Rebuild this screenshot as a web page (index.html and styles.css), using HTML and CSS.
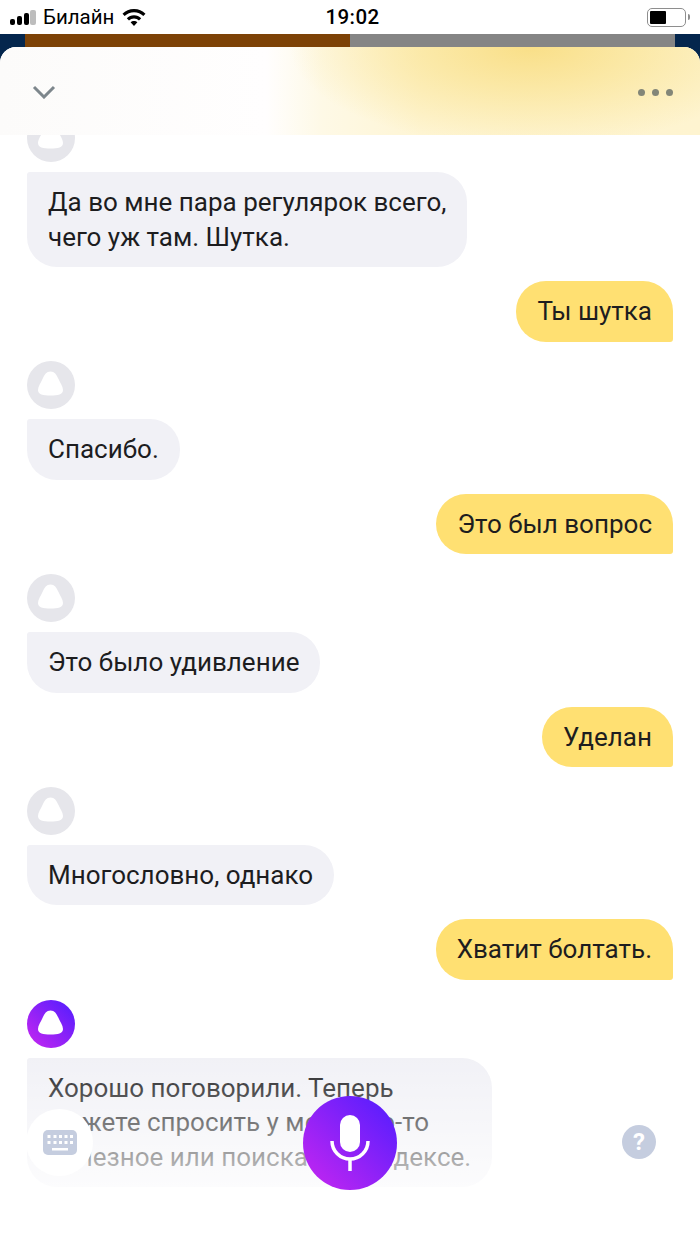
FILE: index.html
```html
<!DOCTYPE html>
<html lang="ru">
<head>
  <meta charset="UTF-8" />
  <title>Алиса</title>
  <link rel="stylesheet" href="styles.css">
</head>
<body>
  <div class="phone">
    <div class="status-bar">
      <div class="status-left">
        <div class="signal">
          <span class="bar b1"></span>
          <span class="bar b2"></span>
          <span class="bar b3"></span>
          <span class="bar b4"></span>
        </div>
        <span class="carrier">Билайн</span>
        <svg class="wifi" width="24" height="18" viewBox="0 0 24 18">
          <path d="M12 1C7.400 1 3.500 2.800.5 5.700l2.200 2.300C5.100 5.700 8.400 4.300 12 4.300s6.900 1.400 9.300 3.700l2.200-2.300C20.500 2.800 16.600 1 12 1z" />
          <path d="M12 7.300c-2.800 0-5.300 1.100-7.200 2.900l2.200 2.300c1.300-1.200 3.100-2 5-2s3.700.8 5 2l2.200-2.300c-1.900-1.800-4.400-2.900-7.200-2.900z" />
          <path d="M12 13c-1.300 0-2.500.5-3.400 1.300L12 18l3.400-3.700c-.9-.8-2.100-1.300-3.400-1.300z" />
        </svg>
      </div>
      <div class="time">19:02</div>
      <div class="battery">
        <div class="battery-body"><div class="battery-level"></div></div>
        <div class="battery-cap"></div>
      </div>
    </div>

    <div class="strip">
      <div class="strip-navy"></div>
      <div class="strip-brown"></div>
      <div class="strip-gray"></div>
      <div class="strip-navy"></div>
    </div>

    <div class="sheet">
      <div class="header">
        <svg class="chevron" width="24" height="14" viewBox="0 0 24 14">
          <path d="M2 2l10 10L22 2" />
        </svg>
        <div class="dots"><span></span><span></span><span></span></div>
      </div>

      <div class="chat">
        <svg class="avatar first" viewBox="0 0 48 48"><use href="#alice-grey" /></svg>
        <div class="msg alice">Да во мне пара регулярок всего,<br>чего уж там. Шутка.</div>
        <div class="msg me">Ты шутка</div>

        <svg class="avatar" viewBox="0 0 48 48"><use href="#alice-grey" /></svg>
        <div class="msg alice">Спасибо.</div>
        <div class="msg me">Это был вопрос</div>

        <svg class="avatar" viewBox="0 0 48 48"><use href="#alice-grey" /></svg>
        <div class="msg alice">Это было удивление</div>
        <div class="msg me">Уделан</div>

        <svg class="avatar" viewBox="0 0 48 48"><use href="#alice-grey" /></svg>
        <div class="msg alice">Многословно, однако</div>
        <div class="msg me">Хватит болтать.</div>

        <svg class="avatar" viewBox="0 0 48 48">
          <defs>
            <linearGradient id="alice-purple" x1="0" y1="1" x2="1" y2="0">
              <stop offset="0" stop-color="#c926f0" />
              <stop offset="1" stop-color="#4f1dff" />
            </linearGradient>
          </defs>
          <circle cx="24" cy="24" r="24" fill="url(#alice-purple)" />
          <path class="alice-shape" d="M23.500 10.500C27.500 10.500 29.500 13.500 31.500 18 33 21.500 36 25.500 36 29 36 33.500 31 34.500 23.500 34.500 16 34.500 11 33.500 11 29 11 25.500 14 21.500 15.500 18 17.500 13.500 19.500 10.500 23.500 10.500z" />
        </svg>
        <div class="msg alice">Хорошо поговорили. Теперь<br>можете спросить у меня что-то<br>полезное или поискать в Яндексе.</div>
      </div>

      <div class="fade"></div>

      <div class="keyboard-btn">
        <svg width="34" height="25" viewBox="0 0 34 25">
          <rect class="kb-body" width="34" height="25" rx="5" />
          <g class="kb-keys">
            <rect x="4.500" y="5" width="3" height="3" />
            <rect x="10.500" y="5" width="3" height="3" />
            <rect x="16" y="5" width="3" height="3" />
            <rect x="21.500" y="5" width="3" height="3" />
            <rect x="27" y="5" width="3" height="3" />
            <rect x="4.500" y="11" width="3" height="3" />
            <rect x="10.500" y="11" width="3" height="3" />
            <rect x="16" y="11" width="3" height="3" />
            <rect x="21.500" y="11" width="3" height="3" />
            <rect x="27" y="11" width="3" height="3" />
            <rect x="9" y="18" width="16" height="2.500" />
          </g>
        </svg>
      </div>

      <div class="mic-btn">
        <svg width="40" height="56" viewBox="0 0 40 56">
          <rect x="10" y="0" width="20" height="37" rx="10" fill="#fff" />
          <path class="mic-arc" d="M2 26c0 10 8 18 18 18s18-8 18-18" />
          <path class="mic-arc" d="M20 44v12" />
        </svg>
      </div>

      <div class="help-btn">?</div>
    </div>

    <svg class="sprites" width="0" height="0">
      <symbol id="alice-grey" viewBox="0 0 48 48">
        <circle cx="24" cy="24" r="24" fill="#e6e6eb" />
        <path fill="#fff" d="M23.500 10.500C27.500 10.500 29.500 13.500 31.500 18 33 21.500 36 25.500 36 29 36 33.500 31 34.500 23.500 34.500 16 34.500 11 33.500 11 29 11 25.500 14 21.500 15.500 18 17.500 13.500 19.500 10.500 23.500 10.500z" />
      </symbol>
    </svg>
  </div>
</body>
</html>
```

FILE: styles.css
```css
* {
  box-sizing: border-box;
}

body {
  margin: 0;
  background: #fff;
  color: #1d1d1f;
  font-family: Roboto, Inter, sans-serif;
}

.phone {
  width: 700px;
  height: 1244px;
  overflow: hidden;
  display: flex;
  flex-direction: column;
  position: relative;
}

/* status bar */
.status-bar {
  height: 34px;
  flex: none;
  display: flex;
  align-items: center;
  justify-content: space-between;
  padding: 0 10px;
  background: #fff;
  color: #000;
  position: relative;
}

.status-left {
  display: flex;
  align-items: center;
}

.signal {
  display: flex;
  align-items: flex-end;
  gap: 1.5px;
  width: 27px;
  height: 16px;
}

.bar {
  width: 5.300px;
  background: #000;
  border-radius: 2px;
}

.b1 { height: 6px; }
.b2 { height: 9px; }
.b3 { height: 12px; }
.b4 { height: 15px; background: #bdbdbd; }

.carrier {
  margin-left: 6px;
  font-size: 20.500px;
}

.wifi {
  margin-left: 8px;
  fill: #000;
}

.time {
  position: absolute;
  left: 0;
  right: 0;
  padding-left: 5px;
  text-align: center;
  font-size: 20.500px;
  font-weight: 500;
  letter-spacing: 0.4px;
}

.battery {
  display: flex;
  align-items: center;
}

.battery-body {
  width: 39px;
  height: 19px;
  border: 1.500px solid #8e8e8e;
  border-radius: 5px;
  padding: 2px;
}

.battery-level {
  width: 16px;
  height: 100%;
  background: #000;
  border-radius: 1px;
}

.battery-cap {
  width: 2px;
  height: 6px;
  margin-left: 2px;
  background: #8e8e8e;
  border-radius: 0 2px 2px 0;
}

/* strip of the page behind the sheet */
.strip {
  position: absolute;
  top: 34px;
  left: 0;
  width: 700px;
  height: 30px;
  display: flex;
}

.strip-navy { width: 25px; background: #04264d; }
.strip-brown { width: 325px; background: #7d4206; }
.strip-gray { width: 325px; background: #858585; }

/* sheet */
.sheet {
  margin-top: 13px;
  flex: 1;
  min-height: 0;
  background: #fff;
  border-radius: 16px 16px 0 0;
  overflow: hidden;
  display: flex;
  flex-direction: column;
  position: relative;
}

.header {
  height: 88px;
  flex: none;
  padding: 0 27px 0 32px;
  display: flex;
  align-items: center;
  justify-content: space-between;
  background:
    radial-gradient(ellipse 240px 100px at 530px 0, #f9df88 0%, rgba(250, 228, 150, 0.7) 45%, rgba(253, 243, 205, 0) 100%),
    linear-gradient(90deg, #fcfbfa 0%, #fffefe 38%, #fef9e6 46%, #fef5d4 60%, #fef4d0 100%);
}

.chevron {
  fill: none;
  stroke: #7d868c;
  stroke-width: 3px;
  margin-top: 2px;
}

.dots {
  display: flex;
  gap: 7px;
  margin-top: 2px;
}

.dots span {
  width: 7px;
  height: 7px;
  border-radius: 50%;
  background: #838678;
}

/* messages */
.chat {
  flex: 1;
  min-height: 0;
  overflow: hidden;
  padding: 0 27px;
  display: flex;
  flex-direction: column;
  align-items: flex-start;
}

.avatar {
  width: 48px;
  height: 48px;
  flex: none;
  margin-top: 19.750px;
  margin-bottom: 10px;
}

.avatar.first {
  margin-top: -21px;
}

.alice-shape {
  fill: #fff;
}

.msg {
  flex: none;
  padding: 13px 21px;
  font-size: 26px;
  line-height: 34.500px;
  white-space: nowrap;
}

.alice {
  background: #f1f1f6;
  border-radius: 3px 30px 30px 30px;
}

.me {
  align-self: flex-end;
  margin-top: 14px;
  background: #ffe072;
  border-radius: 30px 30px 3px 30px;
}

.fade {
  position: absolute;
  left: 0;
  right: 0;
  bottom: 0;
  height: 190px;
  background: linear-gradient(180deg, rgba(255, 255, 255, 0) 0%, rgba(255, 255, 255, 0.78) 70%, #fff 100%);
}

/* bottom controls */
.keyboard-btn {
  position: absolute;
  left: 26px;
  top: 1062px;
  width: 67px;
  height: 67px;
  border-radius: 50%;
  background: #fff;
  display: flex;
  align-items: center;
  justify-content: center;
}

.kb-body { fill: #c5cddf; }
.kb-keys { fill: #fff; }

.mic-btn {
  position: absolute;
  left: 303px;
  top: 1049px;
  width: 94px;
  height: 94px;
  border-radius: 50%;
  background: linear-gradient(45deg, #c926f0 0%, #4f1dff 100%);
  display: flex;
  align-items: center;
  justify-content: center;
}

.mic-arc {
  fill: none;
  stroke: #fff;
  stroke-width: 3.500px;
}

.help-btn {
  position: absolute;
  left: 622px;
  top: 1078px;
  width: 34px;
  height: 34px;
  border-radius: 50%;
  background: #c5cddf;
  color: #fff;
  font-size: 24px;
  font-weight: 700;
  line-height: 34px;
  text-align: center;
}

.sprites {
  position: absolute;
}
```
